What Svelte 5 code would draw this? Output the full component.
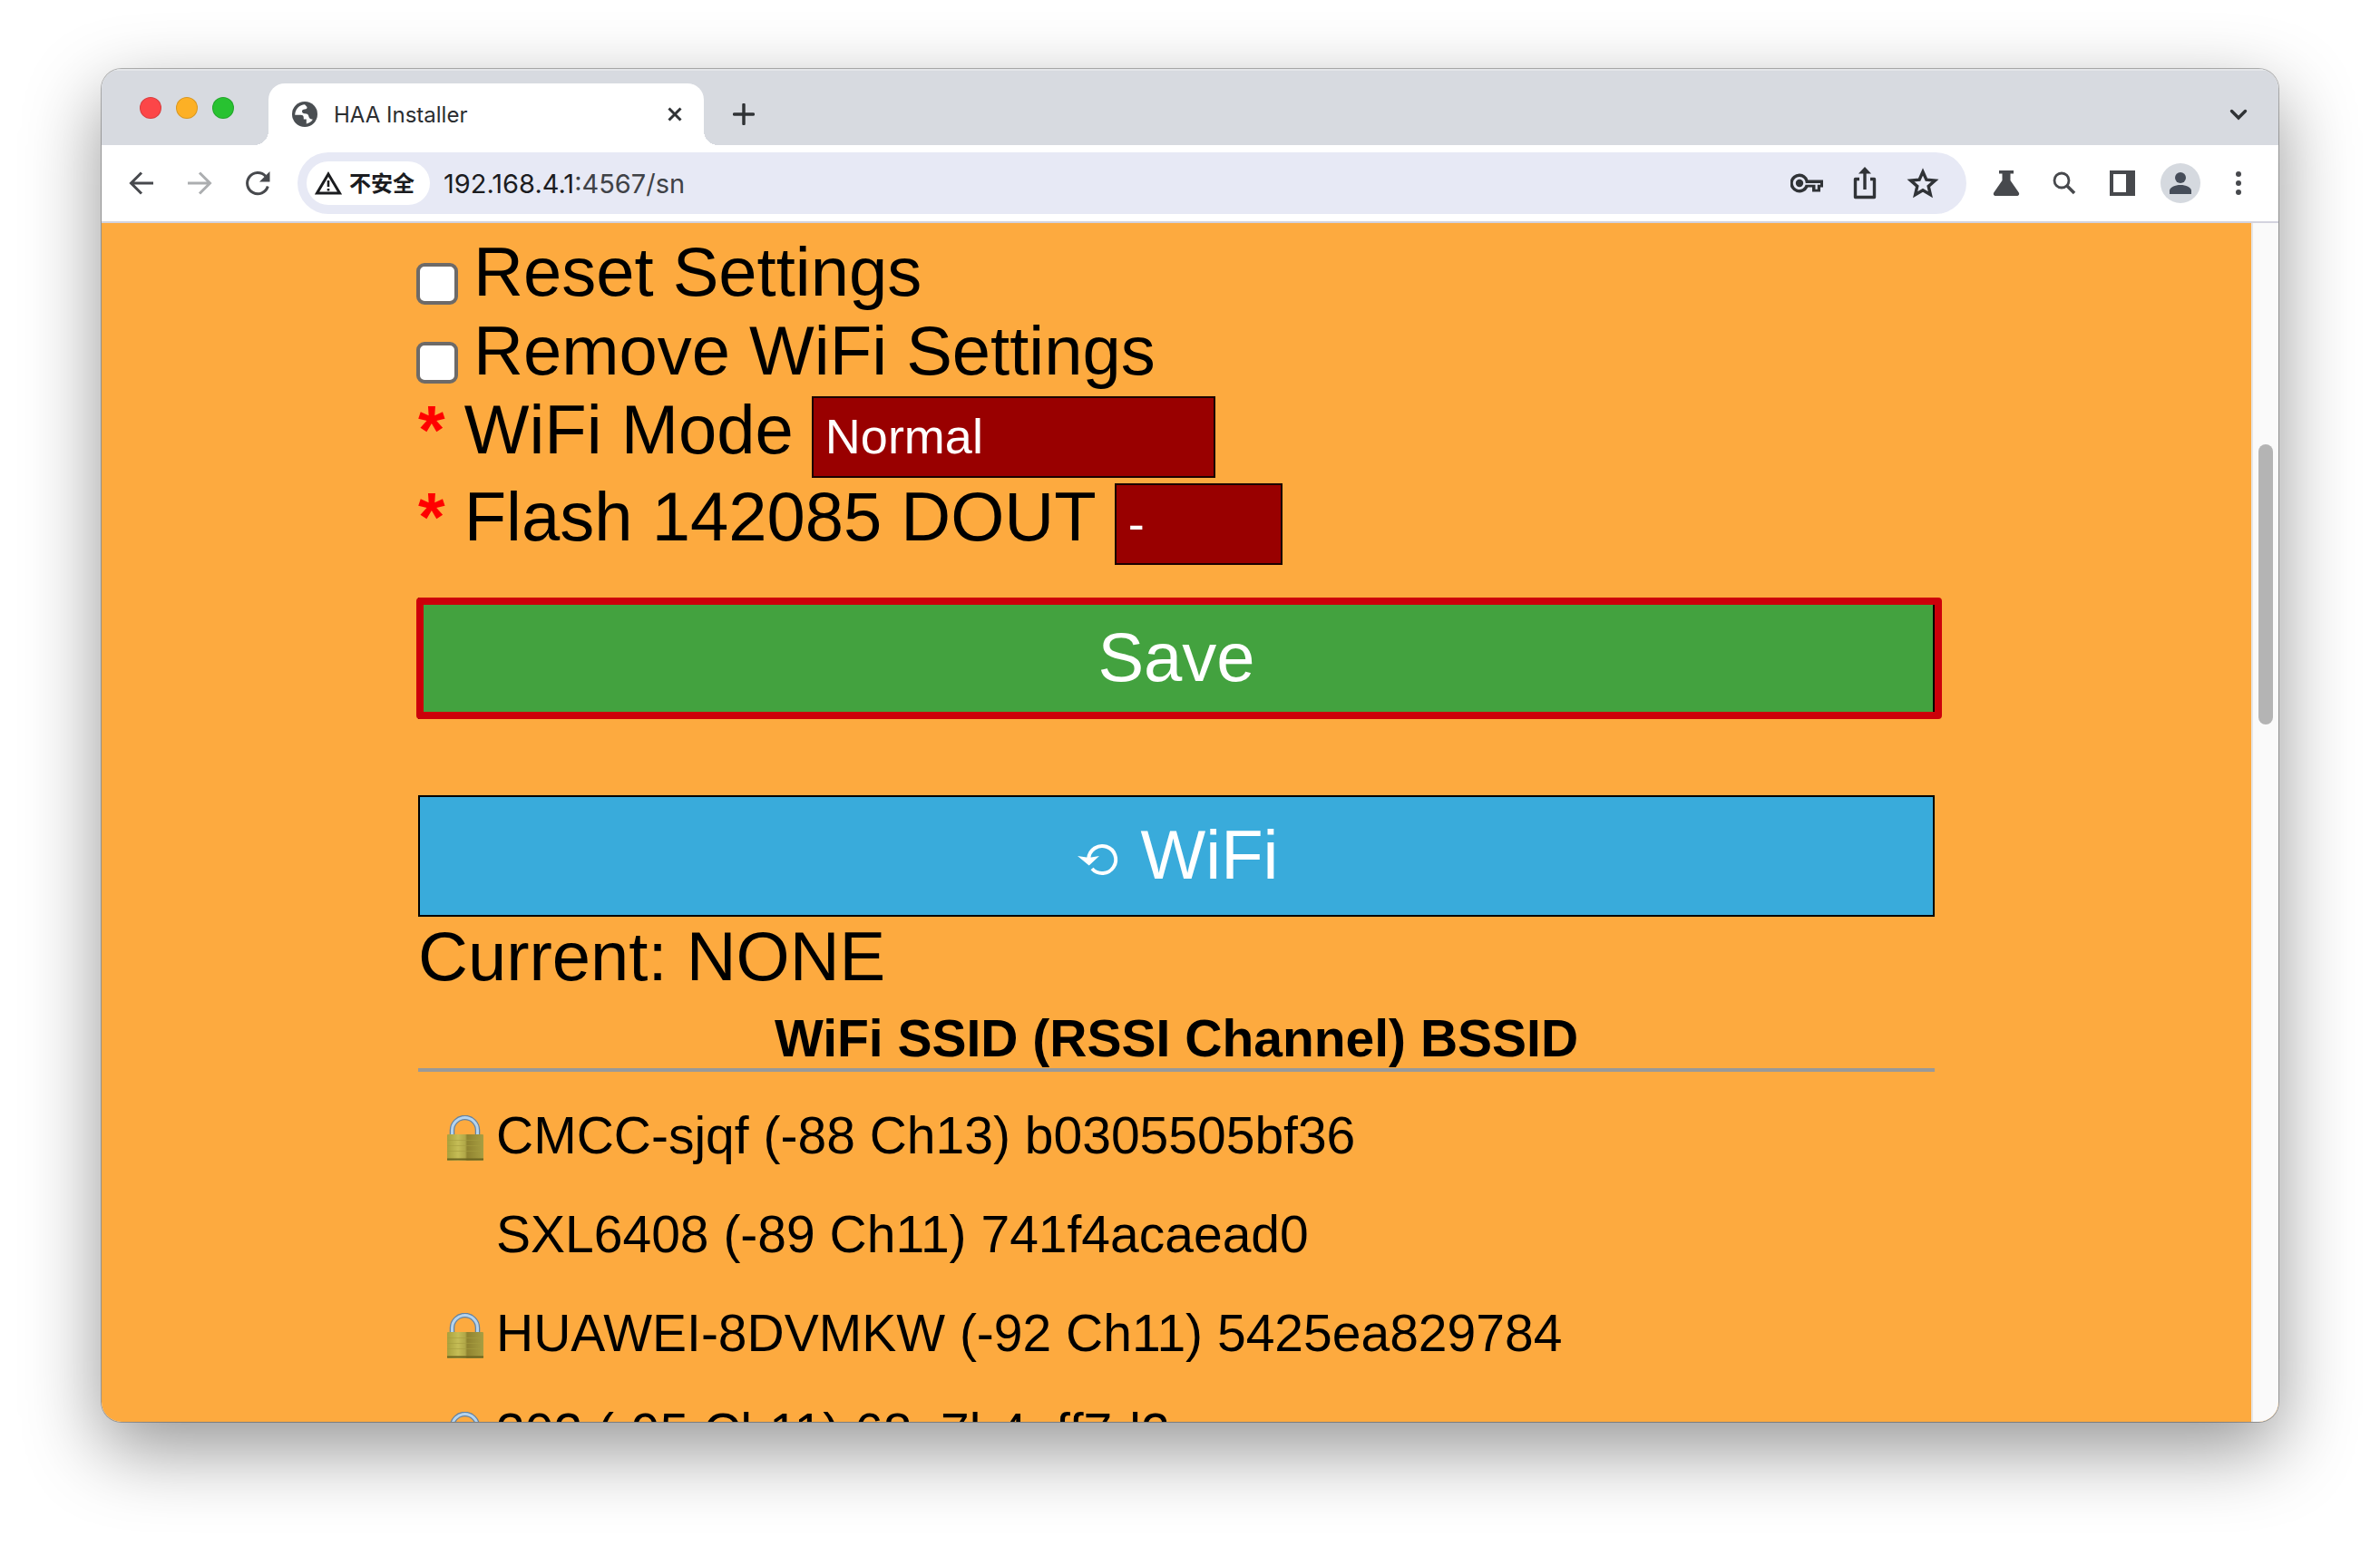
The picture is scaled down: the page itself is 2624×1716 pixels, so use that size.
<script lang="ts">
  interface Network {
    ssid: string;
    info: string;
    bssid: string;
    locked: boolean;
  }

  const networks: Network[] = [
    { ssid: 'CMCC-sjqf', info: '(-88 Ch13)', bssid: 'b0305505bf36', locked: true },
    { ssid: 'SXL6408', info: '(-89 Ch11)', bssid: '741f4acaead0', locked: false },
    { ssid: 'HUAWEI-8DVMKW', info: '(-92 Ch11)', bssid: '5425ea829784', locked: true },
    { ssid: '302', info: '(-95 Ch11)', bssid: '68a7b4eff7d2', locked: true }
  ];

  let reset = $state(false);
  let removeWifi = $state(false);
  let mode = $state('Normal');
  let flash = $state('-');
</script>

<div class="desktop">
  <div class="window">
    <header class="tabs">
      <div class="lights">
        <span class="light red"></span>
        <span class="light amber"></span>
        <span class="light green"></span>
      </div>
      <div class="tab">
        <svg class="globe" viewBox="0 0 28 28" aria-hidden="true">
          <circle cx="14" cy="14" r="14" fill="#4a4e52" />
          <path d="M14 3.2c-2.500 0-5.600 1.200-7.600 3.600C4.400 9.200 3.200 12 3.200 14.800h6.400c2.200 0 3.200 1.100 3.200 3.200v1.600h3v4.900c3.200-.6 5.400-2.200 7.100-4.700-1.600-.3-3-.2-3.900-1.700-.9-1.700-.7-3.600-2.300-4.400-1.700-.8-4.800.1-5.600-2.300-.6-1.900 1-2.900 2.900-3 1.600-.1 2.700-.6 2.500-2.500z" fill="#fff" />
        </svg>
        <span class="tab-title">HAA Installer</span>
        <button class="icon-btn" aria-label="Close tab">
          <svg class="s16" viewBox="0 0 16 16"><path d="M1.500 1.500l13 13M14.500 1.500l-13 13" stroke="#303336" stroke-width="3" /></svg>
        </button>
      </div>
      <button class="icon-btn new-tab" aria-label="New tab">
        <svg class="s24" viewBox="0 0 24 24"><path d="M12 1.500v21M1.500 12h21" stroke="#303336" stroke-width="3.500" stroke-linecap="round" /></svg>
      </button>
      <button class="icon-btn tab-search" aria-label="Search tabs">
        <svg class="s24" viewBox="0 0 24 24"><path d="M4.500 8.500l7.500 7.500 7.500-7.500" fill="none" stroke="#303336" stroke-width="3.400" stroke-linecap="round" /></svg>
      </button>
    </header>

    <nav class="toolbar">
      <button class="icon-btn" aria-label="Back">
        <svg class="s32" viewBox="0 0 32 32"><path d="M29 16H4.500M16 4.500L4.500 16 16 27.500" fill="none" stroke="#47494d" stroke-width="3" /></svg>
      </button>
      <button class="icon-btn" aria-label="Forward">
        <svg class="s32" viewBox="0 0 32 32"><path d="M3 16h24.500M16 4.500L27.500 16 16 27.500" fill="none" stroke="#acaeb0" stroke-width="3" /></svg>
      </button>
      <button class="icon-btn" aria-label="Reload">
        <svg class="s32" viewBox="0 0 32 32">
          <path d="M27.300 19.500A11.600 11.600 0 1 1 24.800 8.300" fill="none" stroke="#47494d" stroke-width="3" />
          <path d="M29.500 3v11.500H18z" fill="#47494d" />
        </svg>
      </button>
      <div class="address">
        <button class="chip">
          <svg class="s30" viewBox="0 0 30 30" aria-hidden="true">
            <path d="M15 5L27.500 26h-25z" fill="none" stroke="#1b1c1f" stroke-width="3" />
            <path d="M15 12v7M15 21v2.500" stroke="#1b1c1f" stroke-width="2.600" />
          </svg>
          <span class="chip-text">不安全</span>
        </button>
        <span class="url">192.168.4.1<span class="path">:4567/sn</span></span>
        <div class="actions">
          <button class="icon-btn" aria-label="Passwords">
            <svg class="s36" viewBox="0 0 36 36">
              <path d="M10 7.500a10.500 10.500 0 1 0 9.400 15H24v5h9v-5h3v-8H19.400A10.500 10.500 0 0 0 10 7.500zm0 3.500a7 7 0 0 1 6.800 7H33v1.800h-3.200v5h-2.300v-5H16.600A7 7 0 1 1 10 11z" fill="#303337" />
              <circle cx="10" cy="18" r="4.200" fill="#303337" />
            </svg>
          </button>
          <button class="icon-btn" aria-label="Share">
            <svg class="s36" viewBox="0 0 36 36">
              <path d="M12 13.500H7.500v20h21v-20H24M18 25V3" fill="none" stroke="#303337" stroke-width="3.400" stroke-linejoin="round" />
              <path d="M18 0l7 7.500H11z" fill="#303337" />
            </svg>
          </button>
          <button class="icon-btn" aria-label="Bookmark">
            <svg class="s36" viewBox="0 0 36 36"><path d="M18 5.500l3.900 8.700 9.500.9-7.200 6.300 2.200 9.400-8.400-5-8.400 5 2.200-9.400-7.200-6.300 9.500-.9z" fill="none" stroke="#303337" stroke-width="3.400" /></svg>
          </button>
        </div>
      </div>
      <div class="extensions">
        <button class="icon-btn" aria-label="Experiments">
          <svg class="s36" viewBox="0 0 36 36"><path d="M10 4h16v3.500h-3.500V15l9 13c1.500 2.200.3 4-2 4h-23c-2.300 0-3.500-1.800-2-4l9-13V7.500H10z" fill="#47494d" /></svg>
        </button>
        <button class="icon-btn" aria-label="Search">
          <svg class="s36" viewBox="0 0 36 36"><circle cx="15" cy="15" r="8" fill="none" stroke="#47494d" stroke-width="2.800" /><path d="M20.500 20.500l8.500 8.500" stroke="#47494d" stroke-width="3.600" /></svg>
        </button>
        <button class="icon-btn" aria-label="Side panel">
          <svg class="s36" viewBox="0 0 36 36"><path d="M4 4h28v28H4zM8 8v20h14V8z" fill="#47494d" fill-rule="evenodd" /></svg>
        </button>
        <button class="icon-btn profile" aria-label="Profile">
          <svg class="s44" viewBox="0 0 44 44"><circle cx="22" cy="22" r="22" fill="#d5d9df" /><circle cx="22" cy="16" r="6" fill="#464d59" /><path d="M10 34v-3.500c0-4 6-6.500 12-6.500s12 2.500 12 6.500V34z" fill="#464d59" /></svg>
        </button>
        <button class="icon-btn" aria-label="Menu">
          <svg class="s36" viewBox="0 0 36 36"><circle cx="18" cy="8" r="3" fill="#47494d" /><circle cx="18" cy="18" r="3" fill="#47494d" /><circle cx="18" cy="28" r="3" fill="#47494d" /></svg>
        </button>
      </div>
    </nav>

    <div class="viewport">
      <main class="page">
        <form class="column" onsubmit={(e) => e.preventDefault()}>
          <label class="row check"><input type="checkbox" bind:checked={reset} />Reset Settings</label>
          <label class="row check"><input type="checkbox" bind:checked={removeWifi} />Remove WiFi Settings</label>
          <div class="row field">
            <label for="mode"><span class="star">*</span> WiFi Mode</label>
            <select id="mode" class="mode" bind:value={mode}>
              <option>Normal</option>
            </select>
          </div>
          <div class="row field">
            <label for="flash"><span class="star">*</span> Flash 142085 DOUT</label>
            <select id="flash" class="flash" bind:value={flash}>
              <option>-</option>
            </select>
          </div>

          <div class="highlight">
            <button type="submit" class="action save">Save</button>
          </div>
          <button type="button" class="action scan">
            <svg class="s52" viewBox="0 0 52 52" aria-hidden="true">
              <path d="M19 42A15 15 0 1 0 15.200 31" fill="none" stroke="#fff" stroke-width="4" />
              <path d="M3 28l12.700 10.500L27 28l-9 1.500h-5z" fill="#fff" />
            </svg>
            WiFi
          </button>
          <div class="row">Current: NONE</div>

          <table class="networks">
            <thead>
              <tr><th colspan="2">WiFi SSID (RSSI Channel) BSSID</th></tr>
            </thead>
            <tbody>
              {#each networks as n (n.bssid)}
                <tr>
                  <td class="lock">
                    {#if n.locked}
                      <svg class="padlock" viewBox="0 0 42 50" role="img" aria-label="Secured">
                        <defs>
                          <linearGradient id="brass" x1="0" x2="1" y1="0" y2="0">
                            <stop offset="0" stop-color="#a8a03c" />
                            <stop offset=".3" stop-color="#c5bd56" />
                            <stop offset=".5" stop-color="#b0a748" />
                            <stop offset=".55" stop-color="#8f8330" />
                            <stop offset="1" stop-color="#a89e42" />
                          </linearGradient>
                        </defs>
                        <path d="M6.500 22V16.500a14 14 0 0 1 28 0V22" fill="none" stroke="#6482a0" stroke-width="5.500" />
                        <path d="M6.500 22V16.500a14 14 0 0 1 28 0V22" fill="none" stroke="#b4d3ee" stroke-width="3" />
                        <rect x="1" y="21" width="40" height="29" rx="1" fill="url(#brass)" />
                        <path d="M1 27.500h40M1 33.500h40M1 39.500h40" stroke="#a79d3f" stroke-width="1" opacity=".6" />
                        <path d="M1 48.500h40" stroke="#6e641f" stroke-width="2" />
                      </svg>
                    {/if}
                  </td>
                  <td>{n.ssid} {n.info} {n.bssid}</td>
                </tr>
              {/each}
            </tbody>
          </table>
        </form>
      </main>
      <div class="scrollbar"><div class="thumb"></div></div>
    </div>
  </div>
</div>

<style>
  :global(body) {
    margin: 0;
    background: #fff;
  }
  .desktop {
    box-sizing: border-box;
    height: 100vh;
    padding: 76px 112px 148px;
    overflow: hidden;
    display: flex;
  }
  .window {
    flex: 1;
    min-width: 0;
    display: flex;
    flex-direction: column;
    border-radius: 22px;
    overflow: hidden;
    background: #fff;
    box-shadow: 0 0 0 1px rgba(0, 0, 0, 0.28), 0 30px 84px rgba(0, 0, 0, 0.42);
    font-family: Inter, "Noto Sans CJK SC", sans-serif;
  }
  button {
    margin: 0;
    font: inherit;
  }
  svg {
    display: block;
    flex: none;
  }
  .s16 { width: 16px; height: 16px; }
  .s24 { width: 24px; height: 24px; }
  .s30 { width: 30px; height: 30px; }
  .s32 { width: 32px; height: 32px; }
  .s36 { width: 36px; height: 36px; }
  .s44 { width: 44px; height: 44px; }
  .s52 { width: 52px; height: 52px; }
  .icon-btn {
    border: 0;
    padding: 0;
    background: none;
    flex: none;
  }

  .tabs {
    height: 84px;
    flex: none;
    display: flex;
    background: #d7dae0;
    box-shadow: inset 0 2px 0 #e4e6e9;
  }
  .lights {
    display: flex;
    gap: 16px;
    padding: 31px 38px 0 42px;
  }
  .light {
    box-sizing: border-box;
    width: 24px;
    height: 24px;
    border-radius: 50%;
    border: 1px solid rgba(0, 0, 0, 0.14);
  }
  .red { background: #fc4648; }
  .amber { background: #fdb025; }
  .green { background: #28c231; }
  .tab {
    position: relative;
    box-sizing: border-box;
    width: 480px;
    height: 68px;
    margin-top: 16px;
    padding: 0 24px 0 26px;
    border-radius: 18px 18px 0 0;
    background: #fff;
    display: flex;
    align-items: center;
  }
  .tab::before,
  .tab::after {
    content: "";
    position: absolute;
    bottom: 0;
    width: 16px;
    height: 16px;
  }
  .tab::before {
    right: 100%;
    background: radial-gradient(circle at 0 0, transparent 16px, #fff 16px);
  }
  .tab::after {
    left: 100%;
    background: radial-gradient(circle at 100% 0, transparent 16px, #fff 16px);
  }
  .globe {
    width: 28px;
    height: 28px;
  }
  .tab-title {
    flex: 1;
    margin-left: 18px;
    font-size: 24px;
    color: #2b2d30;
  }
  .new-tab {
    margin: 16px 0 0 32px;
  }
  .tab-search {
    margin: 16px 32px 0 auto;
  }

  .toolbar {
    height: 84px;
    flex: none;
    display: flex;
    align-items: center;
    gap: 32px;
    padding: 0 26px 0 28px;
    border-bottom: 2px solid #d3d3de;
  }
  .address {
    flex: 1;
    min-width: 0;
    height: 68px;
    box-sizing: border-box;
    margin-left: -4px;
    padding: 0 30px 0 10px;
    border-radius: 34px;
    background: #e7e9f5;
    display: flex;
    align-items: center;
  }
  .chip {
    height: 48px;
    padding: 0 17px 0 9px;
    border: 0;
    border-radius: 24px;
    background: #fff;
    display: flex;
    align-items: center;
    gap: 8px;
    font-size: 24px;
    font-weight: 700;
    color: #1b1c1f;
  }
  .chip-text {
    padding-bottom: 4px;
  }
  .url {
    flex: 1;
    margin-left: 15px;
    font-size: 29px;
    color: #1b1c1f;
  }
  .path { color: #3f4247; }
  .actions {
    display: flex;
    gap: 28px;
  }
  .extensions {
    display: flex;
    align-items: center;
    gap: 28px;
    margin-left: -6px;
  }
  .profile {
    margin: 0 -4px;
  }

  .viewport {
    flex: 1;
    min-height: 0;
    display: flex;
    background: #fdaa3f;
  }
  .page {
    flex: 1;
    min-width: 0;
    overflow: hidden;
    padding: 10px 40px 0;
    font-family: "Liberation Sans", Arial, sans-serif;
    font-size: 76px;
    line-height: 87px;
    color: #000;
  }
  .column {
    max-width: 1672px;
    margin: 0 auto;
  }
  .row {
    display: flex;
    white-space: pre;
  }
  .check {
    gap: 17px;
  }
  .check input {
    appearance: none;
    box-sizing: border-box;
    flex: none;
    width: 46px;
    height: 46px;
    margin: 34px 0 0 -2px;
    border: 4px solid #6d6a68;
    border-radius: 9px;
    background: #fff;
  }
  .field {
    height: 96px;
    gap: 20px;
  }
  .star {
    color: #f00;
    font-weight: 700;
  }
  select {
    appearance: none;
    box-sizing: border-box;
    height: 90px;
    margin: 7px 0 0;
    padding: 0 13px 2px;
    border: 2px solid #1a0000;
    border-radius: 0;
    background: #990000;
    color: #fff;
    font: 54px "Liberation Sans", Arial, sans-serif;
  }
  .mode { width: 445px; }
  .flash { width: 185px; }

  .action {
    box-sizing: border-box;
    width: 100%;
    height: 134px;
    padding: 0 0 4px;
    border: 2px solid #000;
    display: flex;
    align-items: center;
    justify-content: center;
    gap: 21px;
    color: #fff;
  }
  .save { background: #43a23f; }
  .scan {
    margin-top: 84px;
    background: #39abdb;
  }
  .highlight {
    position: relative;
    margin-top: 37px;
  }
  .highlight::after {
    content: "";
    position: absolute;
    inset: 0 -8px 0 -2px;
    border: 8px solid #cc000a;
    border-radius: 4px;
    pointer-events: none;
  }

  .networks {
    width: 100%;
    margin-top: 15px;
    border-collapse: collapse;
    font-size: 57px;
    line-height: 65px;
  }
  th {
    padding: 0;
    border-bottom: 4px solid #999;
    font-weight: 700;
    text-align: center;
  }
  td {
    height: 109px;
    padding: 0;
    white-space: nowrap;
  }
  tbody::before {
    content: "";
    display: block;
    height: 16px;
  }
  .lock {
    width: 86px;
  }
  .padlock {
    width: 42px;
    height: 50px;
    margin: 4px 0 0 31px;
  }

  .scrollbar {
    box-sizing: border-box;
    width: 30px;
    flex: none;
    padding: 244px 6px 0;
    border-left: 2px solid #e6e6e6;
    background: #fafafa;
  }
  .thumb {
    width: 16px;
    height: 309px;
    border-radius: 8px;
    background: #b4b4b4;
  }
</style>
